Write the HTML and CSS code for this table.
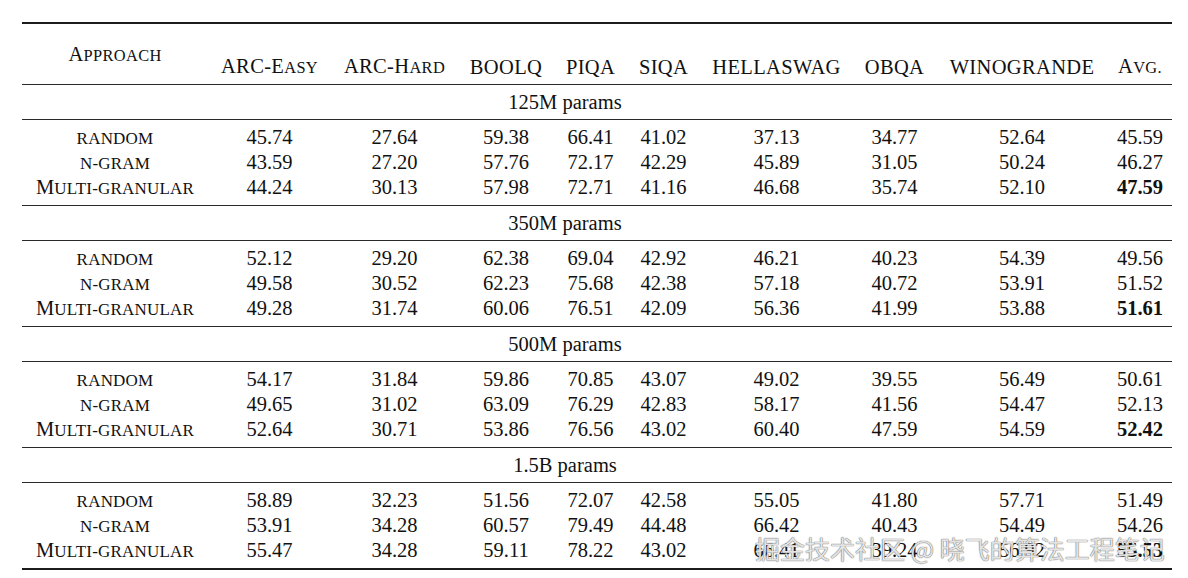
FILE: index.html
```html
<!DOCTYPE html>
<html>
<head>
<meta charset="utf-8">
<link rel="stylesheet" href="styles.css">
</head>
<body>
<div class="table">
  <div class="head">
    <div class="cell approach">A<span class="sc">pproach</span></div>
    <div class="cell">ARC-E<span class="sc">asy</span></div>
    <div class="cell">ARC-H<span class="sc">ard</span></div>
    <div class="cell">BOOLQ</div>
    <div class="cell">PIQA</div>
    <div class="cell">SIQA</div>
    <div class="cell">HELLASWAG</div>
    <div class="cell">OBQA</div>
    <div class="cell">WINOGRANDE</div>
    <div class="cell">A<span class="sc">vg.</span></div>
  </div>

  <div class="group"><div class="glabel">125M params</div></div>
  <div class="block">
    <div class="row"><div class="cell"><span class="sc">random</span></div><div class="cell">45.74</div><div class="cell">27.64</div><div class="cell">59.38</div><div class="cell">66.41</div><div class="cell">41.02</div><div class="cell">37.13</div><div class="cell">34.77</div><div class="cell">52.64</div><div class="cell">45.59</div></div>
    <div class="row"><div class="cell"><span class="sc">n-gram</span></div><div class="cell">43.59</div><div class="cell">27.20</div><div class="cell">57.76</div><div class="cell">72.17</div><div class="cell">42.29</div><div class="cell">45.89</div><div class="cell">31.05</div><div class="cell">50.24</div><div class="cell">46.27</div></div>
    <div class="row"><div class="cell">M<span class="sc">ulti-granular</span></div><div class="cell">44.24</div><div class="cell">30.13</div><div class="cell">57.98</div><div class="cell">72.71</div><div class="cell">41.16</div><div class="cell">46.68</div><div class="cell">35.74</div><div class="cell">52.10</div><div class="cell best">47.59</div></div>
  </div>

  <div class="group"><div class="glabel">350M params</div></div>
  <div class="block">
    <div class="row"><div class="cell"><span class="sc">random</span></div><div class="cell">52.12</div><div class="cell">29.20</div><div class="cell">62.38</div><div class="cell">69.04</div><div class="cell">42.92</div><div class="cell">46.21</div><div class="cell">40.23</div><div class="cell">54.39</div><div class="cell">49.56</div></div>
    <div class="row"><div class="cell"><span class="sc">n-gram</span></div><div class="cell">49.58</div><div class="cell">30.52</div><div class="cell">62.23</div><div class="cell">75.68</div><div class="cell">42.38</div><div class="cell">57.18</div><div class="cell">40.72</div><div class="cell">53.91</div><div class="cell">51.52</div></div>
    <div class="row"><div class="cell">M<span class="sc">ulti-granular</span></div><div class="cell">49.28</div><div class="cell">31.74</div><div class="cell">60.06</div><div class="cell">76.51</div><div class="cell">42.09</div><div class="cell">56.36</div><div class="cell">41.99</div><div class="cell">53.88</div><div class="cell best">51.61</div></div>
  </div>

  <div class="group"><div class="glabel">500M params</div></div>
  <div class="block">
    <div class="row"><div class="cell"><span class="sc">random</span></div><div class="cell">54.17</div><div class="cell">31.84</div><div class="cell">59.86</div><div class="cell">70.85</div><div class="cell">43.07</div><div class="cell">49.02</div><div class="cell">39.55</div><div class="cell">56.49</div><div class="cell">50.61</div></div>
    <div class="row"><div class="cell"><span class="sc">n-gram</span></div><div class="cell">49.65</div><div class="cell">31.02</div><div class="cell">63.09</div><div class="cell">76.29</div><div class="cell">42.83</div><div class="cell">58.17</div><div class="cell">41.56</div><div class="cell">54.47</div><div class="cell">52.13</div></div>
    <div class="row"><div class="cell">M<span class="sc">ulti-granular</span></div><div class="cell">52.64</div><div class="cell">30.71</div><div class="cell">53.86</div><div class="cell">76.56</div><div class="cell">43.02</div><div class="cell">60.40</div><div class="cell">47.59</div><div class="cell">54.59</div><div class="cell best">52.42</div></div>
  </div>

  <div class="group"><div class="glabel">1.5B params</div></div>
  <div class="block">
    <div class="row"><div class="cell"><span class="sc">random</span></div><div class="cell">58.89</div><div class="cell">32.23</div><div class="cell">51.56</div><div class="cell">72.07</div><div class="cell">42.58</div><div class="cell">55.05</div><div class="cell">41.80</div><div class="cell">57.71</div><div class="cell">51.49</div></div>
    <div class="row"><div class="cell"><span class="sc">n-gram</span></div><div class="cell">53.91</div><div class="cell">34.28</div><div class="cell">60.57</div><div class="cell">79.49</div><div class="cell">44.48</div><div class="cell">66.42</div><div class="cell">40.43</div><div class="cell">54.49</div><div class="cell">54.26</div></div>
    <div class="row"><div class="cell">M<span class="sc">ulti-granular</span></div><div class="cell">55.47</div><div class="cell">34.28</div><div class="cell">59.11</div><div class="cell">78.22</div><div class="cell">43.02</div><div class="cell">66.41</div><div class="cell">39.24</div><div class="cell">56.92</div><div class="cell best">55.53</div></div>
  </div>
</div>
<div class="watermark">掘金技术社区 @ 晓飞的算法工程笔记</div>
</body>
</html>
```

FILE: styles.css
```css
html, body {
  margin: 0;
  padding: 0;
  background: #ffffff;
}

body {
  position: relative;
  width: 1188px;
  height: 578px;
  overflow: hidden;
  font-family: "Liberation Serif", "Times New Roman", serif;
  font-size: 20.5px;
  color: #111111;
}

.table {
  margin: 22px 0 0 22px;
  width: 1150px;
  border-top: 2px solid #1c1c1c;
  border-bottom: 2px solid #1c1c1c;
}

.head,
.row {
  display: grid;
  grid-template-columns: 186px 123px 127px 96px 73px 73px 153px 83px 172px 64px;
}

.head {
  height: 60px;
  align-items: end;
  border-bottom: 1px solid #2a2a2a;
}

.cell {
  text-align: center;
  line-height: 25px;
  white-space: nowrap;
}

.head .cell {
  padding-bottom: 4px;
  letter-spacing: 0.35px;
}

.head .approach {
  align-self: center;
  padding: 2px 0 0 0;
}

.sc {
  text-transform: uppercase;
  font-size: 0.8em;
}

.row .sc {
  font-size: 0.83em;
  letter-spacing: 0.2px;
}

.group {
  display: grid;
  grid-template-columns: 1086px 64px;
  height: 34px;
  border-bottom: 1px solid #2a2a2a;
}

.glabel {
  text-align: center;
  line-height: 34px;
}

.block {
  padding: 5px 0;
  border-bottom: 1px solid #2a2a2a;
}

.block:last-child {
  border-bottom: none;
}

.row {
  height: 25px;
}

.best {
  font-weight: bold;
}

.watermark {
  position: absolute;
  left: 755px;
  top: 532px;
  font-family: "Noto Sans CJK SC", "Noto Sans", sans-serif;
  font-size: 25px;
  line-height: 32px;
  white-space: nowrap;
  color: rgba(255, 255, 255, 0.85);
  text-shadow: 0 0 1px rgba(70, 70, 70, 0.9), 0 0 1px rgba(70, 70, 70, 0.7);
}
```
